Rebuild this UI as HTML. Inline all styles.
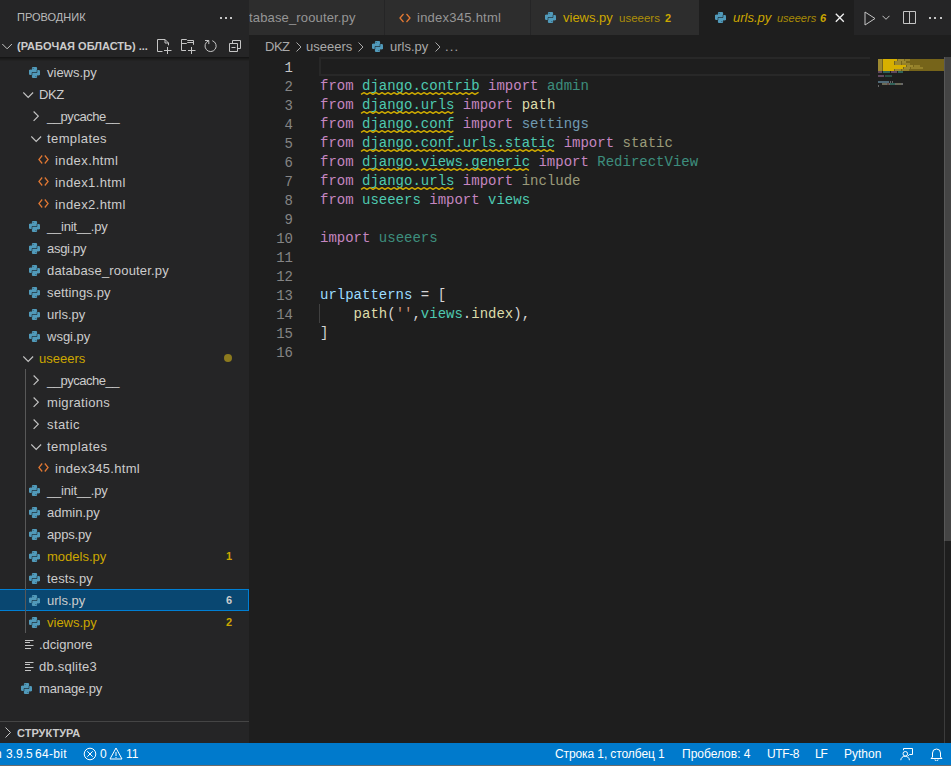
<!DOCTYPE html>
<html><head><meta charset="utf-8">
<style>
*{margin:0;padding:0;box-sizing:border-box}
html,body{width:951px;height:766px;overflow:hidden;background:#1e1e1e;font-family:"Liberation Sans",sans-serif;color:#cccccc;position:relative}
.a{position:absolute;white-space:pre}
.ic{position:absolute;display:block}
#side{position:absolute;left:0;top:0;width:249px;height:743px;background:#252526;overflow:hidden}
.tr{height:22px;line-height:22px;font-size:13px}
#tabs{position:absolute;left:249px;top:0;width:702px;height:35px;background:#252526}
.tab{position:absolute;top:0;height:35px;background:#2d2d2d;line-height:35px;font-size:13px;color:#969696;overflow:hidden}
.code{position:absolute;left:320px;height:19px;line-height:19px;font-family:"Liberation Mono",monospace;font-size:14px;color:#d4d4d4;white-space:pre}
.ln{position:absolute;left:249px;width:44px;text-align:right;height:19px;line-height:19px;font-family:"Liberation Mono",monospace;font-size:14px;color:#858585}
.k{color:#c586c0}.n{color:#4ec9b0}.f{color:#dcdcaa}.v{color:#9cdcfe}.s{color:#ce9178}
.fade{opacity:.65}
.sq{text-decoration:underline wavy #cca700;text-underline-offset:3px;text-decoration-thickness:1px}
#status{position:absolute;left:0;top:743px;width:951px;height:22px;background:#007acc;color:#ffffff;font-size:12px;line-height:22px}
#bline{position:absolute;left:0;top:765px;width:951px;height:1px;background:#6b6b6b}
</style></head><body>
<div id="side">
  <div class="a" style="left:17px;top:0;height:35px;line-height:35px;font-size:11px;color:#bbbbbb">ПРОВОДНИК</div>
  <div style="position:absolute;left:220px;top:17px;width:2px;height:2px;background:#c5c5c5"></div><div style="position:absolute;left:225px;top:17px;width:2px;height:2px;background:#c5c5c5"></div><div style="position:absolute;left:230px;top:17px;width:2px;height:2px;background:#c5c5c5"></div>
  <!-- workspace header -->
  <svg class="ic" style="left:2px;top:43px" width="11" height="7" viewBox="0 0 11 7"><path d="M0.3 1l4.8 4.8 4.8-4.8" fill="none" stroke="#c5c5c5" stroke-width="1"/></svg>
  <div class="a" style="left:17px;top:35px;height:22px;line-height:22px;font-size:11px;font-weight:bold;color:#cccccc">(РАБОЧАЯ ОБЛАСТЬ) ...</div>
  <!-- header icons -->
  <svg class="ic" style="left:156px;top:38px" width="17" height="17" viewBox="0 0 17 17"><path d="M6.5 13.5h-5v-12h7.5l3.5 3.5v2.3M9 1.5v3.5h3.5M8 12.5h7.5M11.5 9v7" fill="none" stroke="#c5c5c5" stroke-width="1"/></svg>
  <svg class="ic" style="left:180px;top:38px" width="17" height="17" viewBox="0 0 17 17"><path d="M6 12.5H1.5v-11h5l1 1h6v4.3M1.5 5.5h5l1-1h6M8 12.5h7.5M11.5 9v7" fill="none" stroke="#c5c5c5" stroke-width="1"/></svg>
  <svg class="ic" style="left:204px;top:39px" width="14" height="14" viewBox="0 0 14 14"><path d="M4.6 1.8A5.57 5.57 0 1 0 8.3 1.7" fill="none" stroke="#c5c5c5" stroke-width="1"/><path d="M1 1.5h3.8v3.6" fill="none" stroke="#c5c5c5" stroke-width="1"/></svg>
  <svg class="ic" style="left:228px;top:39px" width="14" height="14" viewBox="0 0 14 14"><path d="M4.5 4.5V1.5h8v8h-3M1.5 4.5h8v8h-8z M3.5 8.5h4" fill="none" stroke="#c5c5c5" stroke-width="1"/></svg>
  <div style="position:absolute;left:0;top:57px;width:249px;height:1px;background:#151515"></div><div style="position:absolute;left:0;top:58px;width:249px;height:1px;background:#1a1a1a"></div><div style="position:absolute;left:0;top:59px;width:249px;height:1px;background:#1e1e1e"></div><div style="position:absolute;left:0;top:60px;width:249px;height:1px;background:#222222"></div>
<svg class="ic" style="left:29px;top:67px" width="11" height="11" viewBox="0 0 11 11"><g fill="#519aba"><rect x="2.9" y="0" width="5.2" height="5.2" rx="1.1"/><rect x="0" y="2.7" width="3.4" height="5.3" rx="1.3"/><rect x="0" y="2.7" width="8.1" height="2.5" rx="1"/><rect x="2.9" y="5.8" width="5.2" height="5.2" rx="1.1"/><rect x="7.6" y="3" width="3.4" height="5.3" rx="1.3"/><rect x="2.9" y="5.8" width="8.1" height="2.5" rx="1"/></g><path d="M8 2.9V5.5H3V8.1" fill="none" stroke="#1d2a30" stroke-width=".7" opacity=".8"/><circle cx="4.1" cy="1.4" r=".5" fill="#2a4a5a"/><circle cx="6.9" cy="9.6" r=".5" fill="#2a4a5a"/></svg>
<div class="a tr" style="left:47px;top:62px;color:#cccccc">views.py</div>
<svg class="ic" style="left:23px;top:92px" width="11" height="7" viewBox="0 0 11 7"><path d="M0.3 0.5l4.9 4.9 4.9-4.9" fill="none" stroke="#c5c5c5" stroke-width="1.15"/></svg>
<div class="a tr" style="left:39px;top:84px;color:#cccccc;letter-spacing:-0.400px">DKZ</div>
<svg class="ic" style="left:33px;top:111px" width="6" height="11" viewBox="0 0 6 11"><path d="M0.6 0.5l4.7 4.7-4.7 4.7" fill="none" stroke="#c5c5c5" stroke-width="1.15"/></svg>
<div class="a tr" style="left:47px;top:106px;color:#cccccc;letter-spacing:-0.450px">__pycache__</div>
<svg class="ic" style="left:31px;top:136px" width="11" height="7" viewBox="0 0 11 7"><path d="M0.3 0.5l4.9 4.9 4.9-4.9" fill="none" stroke="#c5c5c5" stroke-width="1.15"/></svg>
<div class="a tr" style="left:47px;top:128px;color:#cccccc;letter-spacing:0.400px">templates</div>
<svg class="ic" style="left:38px;top:155px" width="11" height="9" viewBox="0 0 11 9"><path d="M4.2 0.5L0.9 4.5l3.3 4M6.8 0.5l3.3 4-3.3 4" fill="none" stroke="#e37933" stroke-width="1.2"/></svg>
<div class="a tr" style="left:55px;top:150px;color:#cccccc;letter-spacing:0.411px">index.html</div>
<svg class="ic" style="left:38px;top:177px" width="11" height="9" viewBox="0 0 11 9"><path d="M4.2 0.5L0.9 4.5l3.3 4M6.8 0.5l3.3 4-3.3 4" fill="none" stroke="#e37933" stroke-width="1.2"/></svg>
<div class="a tr" style="left:55px;top:172px;color:#cccccc;letter-spacing:0.400px">index1.html</div>
<svg class="ic" style="left:38px;top:199px" width="11" height="9" viewBox="0 0 11 9"><path d="M4.2 0.5L0.9 4.5l3.3 4M6.8 0.5l3.3 4-3.3 4" fill="none" stroke="#e37933" stroke-width="1.2"/></svg>
<div class="a tr" style="left:55px;top:194px;color:#cccccc;letter-spacing:0.400px">index2.html</div>
<svg class="ic" style="left:29px;top:221px" width="11" height="11" viewBox="0 0 11 11"><g fill="#519aba"><rect x="2.9" y="0" width="5.2" height="5.2" rx="1.1"/><rect x="0" y="2.7" width="3.4" height="5.3" rx="1.3"/><rect x="0" y="2.7" width="8.1" height="2.5" rx="1"/><rect x="2.9" y="5.8" width="5.2" height="5.2" rx="1.1"/><rect x="7.6" y="3" width="3.4" height="5.3" rx="1.3"/><rect x="2.9" y="5.8" width="8.1" height="2.5" rx="1"/></g><path d="M8 2.9V5.5H3V8.1" fill="none" stroke="#1d2a30" stroke-width=".7" opacity=".8"/><circle cx="4.1" cy="1.4" r=".5" fill="#2a4a5a"/><circle cx="6.9" cy="9.6" r=".5" fill="#2a4a5a"/></svg>
<div class="a tr" style="left:47px;top:216px;color:#cccccc;letter-spacing:-0.220px">__init__.py</div>
<svg class="ic" style="left:29px;top:243px" width="11" height="11" viewBox="0 0 11 11"><g fill="#519aba"><rect x="2.9" y="0" width="5.2" height="5.2" rx="1.1"/><rect x="0" y="2.7" width="3.4" height="5.3" rx="1.3"/><rect x="0" y="2.7" width="8.1" height="2.5" rx="1"/><rect x="2.9" y="5.8" width="5.2" height="5.2" rx="1.1"/><rect x="7.6" y="3" width="3.4" height="5.3" rx="1.3"/><rect x="2.9" y="5.8" width="8.1" height="2.5" rx="1"/></g><path d="M8 2.9V5.5H3V8.1" fill="none" stroke="#1d2a30" stroke-width=".7" opacity=".8"/><circle cx="4.1" cy="1.4" r=".5" fill="#2a4a5a"/><circle cx="6.9" cy="9.6" r=".5" fill="#2a4a5a"/></svg>
<div class="a tr" style="left:47px;top:238px;color:#cccccc;letter-spacing:-0.300px">asgi.py</div>
<svg class="ic" style="left:29px;top:265px" width="11" height="11" viewBox="0 0 11 11"><g fill="#519aba"><rect x="2.9" y="0" width="5.2" height="5.2" rx="1.1"/><rect x="0" y="2.7" width="3.4" height="5.3" rx="1.3"/><rect x="0" y="2.7" width="8.1" height="2.5" rx="1"/><rect x="2.9" y="5.8" width="5.2" height="5.2" rx="1.1"/><rect x="7.6" y="3" width="3.4" height="5.3" rx="1.3"/><rect x="2.9" y="5.8" width="8.1" height="2.5" rx="1"/></g><path d="M8 2.9V5.5H3V8.1" fill="none" stroke="#1d2a30" stroke-width=".7" opacity=".8"/><circle cx="4.1" cy="1.4" r=".5" fill="#2a4a5a"/><circle cx="6.9" cy="9.6" r=".5" fill="#2a4a5a"/></svg>
<div class="a tr" style="left:47px;top:260px;color:#cccccc;letter-spacing:0.178px">database_roouter.py</div>
<svg class="ic" style="left:29px;top:287px" width="11" height="11" viewBox="0 0 11 11"><g fill="#519aba"><rect x="2.9" y="0" width="5.2" height="5.2" rx="1.1"/><rect x="0" y="2.7" width="3.4" height="5.3" rx="1.3"/><rect x="0" y="2.7" width="8.1" height="2.5" rx="1"/><rect x="2.9" y="5.8" width="5.2" height="5.2" rx="1.1"/><rect x="7.6" y="3" width="3.4" height="5.3" rx="1.3"/><rect x="2.9" y="5.8" width="8.1" height="2.5" rx="1"/></g><path d="M8 2.9V5.5H3V8.1" fill="none" stroke="#1d2a30" stroke-width=".7" opacity=".8"/><circle cx="4.1" cy="1.4" r=".5" fill="#2a4a5a"/><circle cx="6.9" cy="9.6" r=".5" fill="#2a4a5a"/></svg>
<div class="a tr" style="left:47px;top:282px;color:#cccccc;letter-spacing:0.140px">settings.py</div>
<svg class="ic" style="left:29px;top:309px" width="11" height="11" viewBox="0 0 11 11"><g fill="#519aba"><rect x="2.9" y="0" width="5.2" height="5.2" rx="1.1"/><rect x="0" y="2.7" width="3.4" height="5.3" rx="1.3"/><rect x="0" y="2.7" width="8.1" height="2.5" rx="1"/><rect x="2.9" y="5.8" width="5.2" height="5.2" rx="1.1"/><rect x="7.6" y="3" width="3.4" height="5.3" rx="1.3"/><rect x="2.9" y="5.8" width="8.1" height="2.5" rx="1"/></g><path d="M8 2.9V5.5H3V8.1" fill="none" stroke="#1d2a30" stroke-width=".7" opacity=".8"/><circle cx="4.1" cy="1.4" r=".5" fill="#2a4a5a"/><circle cx="6.9" cy="9.6" r=".5" fill="#2a4a5a"/></svg>
<div class="a tr" style="left:47px;top:304px;color:#cccccc">urls.py</div>
<svg class="ic" style="left:29px;top:331px" width="11" height="11" viewBox="0 0 11 11"><g fill="#519aba"><rect x="2.9" y="0" width="5.2" height="5.2" rx="1.1"/><rect x="0" y="2.7" width="3.4" height="5.3" rx="1.3"/><rect x="0" y="2.7" width="8.1" height="2.5" rx="1"/><rect x="2.9" y="5.8" width="5.2" height="5.2" rx="1.1"/><rect x="7.6" y="3" width="3.4" height="5.3" rx="1.3"/><rect x="2.9" y="5.8" width="8.1" height="2.5" rx="1"/></g><path d="M8 2.9V5.5H3V8.1" fill="none" stroke="#1d2a30" stroke-width=".7" opacity=".8"/><circle cx="4.1" cy="1.4" r=".5" fill="#2a4a5a"/><circle cx="6.9" cy="9.6" r=".5" fill="#2a4a5a"/></svg>
<div class="a tr" style="left:47px;top:326px;color:#cccccc">wsgi.py</div>
<svg class="ic" style="left:23px;top:356px" width="11" height="7" viewBox="0 0 11 7"><path d="M0.3 0.5l4.9 4.9 4.9-4.9" fill="none" stroke="#c5c5c5" stroke-width="1.15"/></svg>
<div class="a tr" style="left:39px;top:348px;color:#cca700">useeers</div>
<div style="position:absolute;left:224px;top:354px;width:8px;height:8px;border-radius:4px;background:#8c7a1e"></div>
<svg class="ic" style="left:33px;top:375px" width="6" height="11" viewBox="0 0 6 11"><path d="M0.6 0.5l4.7 4.7-4.7 4.7" fill="none" stroke="#c5c5c5" stroke-width="1.15"/></svg>
<div class="a tr" style="left:47px;top:370px;color:#cccccc;letter-spacing:-0.480px">__pycache__</div>
<svg class="ic" style="left:33px;top:397px" width="6" height="11" viewBox="0 0 6 11"><path d="M0.6 0.5l4.7 4.7-4.7 4.7" fill="none" stroke="#c5c5c5" stroke-width="1.15"/></svg>
<div class="a tr" style="left:47px;top:392px;color:#cccccc;letter-spacing:0.322px">migrations</div>
<svg class="ic" style="left:33px;top:419px" width="6" height="11" viewBox="0 0 6 11"><path d="M0.6 0.5l4.7 4.7-4.7 4.7" fill="none" stroke="#c5c5c5" stroke-width="1.15"/></svg>
<div class="a tr" style="left:47px;top:414px;color:#cccccc;letter-spacing:0.420px">static</div>
<svg class="ic" style="left:31px;top:444px" width="11" height="7" viewBox="0 0 11 7"><path d="M0.3 0.5l4.9 4.9 4.9-4.9" fill="none" stroke="#c5c5c5" stroke-width="1.15"/></svg>
<div class="a tr" style="left:47px;top:436px;color:#cccccc;letter-spacing:0.463px">templates</div>
<svg class="ic" style="left:38px;top:463px" width="11" height="9" viewBox="0 0 11 9"><path d="M4.2 0.5L0.9 4.5l3.3 4M6.8 0.5l3.3 4-3.3 4" fill="none" stroke="#e37933" stroke-width="1.2"/></svg>
<div class="a tr" style="left:55px;top:458px;color:#cccccc;letter-spacing:0.317px">index345.html</div>
<svg class="ic" style="left:29px;top:485px" width="11" height="11" viewBox="0 0 11 11"><g fill="#519aba"><rect x="2.9" y="0" width="5.2" height="5.2" rx="1.1"/><rect x="0" y="2.7" width="3.4" height="5.3" rx="1.3"/><rect x="0" y="2.7" width="8.1" height="2.5" rx="1"/><rect x="2.9" y="5.8" width="5.2" height="5.2" rx="1.1"/><rect x="7.6" y="3" width="3.4" height="5.3" rx="1.3"/><rect x="2.9" y="5.8" width="8.1" height="2.5" rx="1"/></g><path d="M8 2.9V5.5H3V8.1" fill="none" stroke="#1d2a30" stroke-width=".7" opacity=".8"/><circle cx="4.1" cy="1.4" r=".5" fill="#2a4a5a"/><circle cx="6.9" cy="9.6" r=".5" fill="#2a4a5a"/></svg>
<div class="a tr" style="left:47px;top:480px;color:#cccccc;letter-spacing:-0.210px">__init__.py</div>
<svg class="ic" style="left:29px;top:507px" width="11" height="11" viewBox="0 0 11 11"><g fill="#519aba"><rect x="2.9" y="0" width="5.2" height="5.2" rx="1.1"/><rect x="0" y="2.7" width="3.4" height="5.3" rx="1.3"/><rect x="0" y="2.7" width="8.1" height="2.5" rx="1"/><rect x="2.9" y="5.8" width="5.2" height="5.2" rx="1.1"/><rect x="7.6" y="3" width="3.4" height="5.3" rx="1.3"/><rect x="2.9" y="5.8" width="8.1" height="2.5" rx="1"/></g><path d="M8 2.9V5.5H3V8.1" fill="none" stroke="#1d2a30" stroke-width=".7" opacity=".8"/><circle cx="4.1" cy="1.4" r=".5" fill="#2a4a5a"/><circle cx="6.9" cy="9.6" r=".5" fill="#2a4a5a"/></svg>
<div class="a tr" style="left:47px;top:502px;color:#cccccc">admin.py</div>
<svg class="ic" style="left:29px;top:529px" width="11" height="11" viewBox="0 0 11 11"><g fill="#519aba"><rect x="2.9" y="0" width="5.2" height="5.2" rx="1.1"/><rect x="0" y="2.7" width="3.4" height="5.3" rx="1.3"/><rect x="0" y="2.7" width="8.1" height="2.5" rx="1"/><rect x="2.9" y="5.8" width="5.2" height="5.2" rx="1.1"/><rect x="7.6" y="3" width="3.4" height="5.3" rx="1.3"/><rect x="2.9" y="5.8" width="8.1" height="2.5" rx="1"/></g><path d="M8 2.9V5.5H3V8.1" fill="none" stroke="#1d2a30" stroke-width=".7" opacity=".8"/><circle cx="4.1" cy="1.4" r=".5" fill="#2a4a5a"/><circle cx="6.9" cy="9.6" r=".5" fill="#2a4a5a"/></svg>
<div class="a tr" style="left:47px;top:524px;color:#cccccc;letter-spacing:-0.167px">apps.py</div>
<svg class="ic" style="left:29px;top:551px" width="11" height="11" viewBox="0 0 11 11"><g fill="#519aba"><rect x="2.9" y="0" width="5.2" height="5.2" rx="1.1"/><rect x="0" y="2.7" width="3.4" height="5.3" rx="1.3"/><rect x="0" y="2.7" width="8.1" height="2.5" rx="1"/><rect x="2.9" y="5.8" width="5.2" height="5.2" rx="1.1"/><rect x="7.6" y="3" width="3.4" height="5.3" rx="1.3"/><rect x="2.9" y="5.8" width="8.1" height="2.5" rx="1"/></g><path d="M8 2.9V5.5H3V8.1" fill="none" stroke="#1d2a30" stroke-width=".7" opacity=".8"/><circle cx="4.1" cy="1.4" r=".5" fill="#2a4a5a"/><circle cx="6.9" cy="9.6" r=".5" fill="#2a4a5a"/></svg>
<div class="a tr" style="left:47px;top:546px;color:#cca700">models.py</div>
<div class="a tr" style="left:226px;top:545px;color:#cca700;font-size:11px;font-weight:bold">1</div>
<svg class="ic" style="left:29px;top:573px" width="11" height="11" viewBox="0 0 11 11"><g fill="#519aba"><rect x="2.9" y="0" width="5.2" height="5.2" rx="1.1"/><rect x="0" y="2.7" width="3.4" height="5.3" rx="1.3"/><rect x="0" y="2.7" width="8.1" height="2.5" rx="1"/><rect x="2.9" y="5.8" width="5.2" height="5.2" rx="1.1"/><rect x="7.6" y="3" width="3.4" height="5.3" rx="1.3"/><rect x="2.9" y="5.8" width="8.1" height="2.5" rx="1"/></g><path d="M8 2.9V5.5H3V8.1" fill="none" stroke="#1d2a30" stroke-width=".7" opacity=".8"/><circle cx="4.1" cy="1.4" r=".5" fill="#2a4a5a"/><circle cx="6.9" cy="9.6" r=".5" fill="#2a4a5a"/></svg>
<div class="a tr" style="left:47px;top:568px;color:#cccccc;letter-spacing:0.143px">tests.py</div>
<div style="position:absolute;left:0;top:589px;width:249px;height:22px;background:#094771;border:1px solid #007fd4;border-left:none"></div>
<svg class="ic" style="left:29px;top:595px" width="11" height="11" viewBox="0 0 11 11"><g fill="#519aba"><rect x="2.9" y="0" width="5.2" height="5.2" rx="1.1"/><rect x="0" y="2.7" width="3.4" height="5.3" rx="1.3"/><rect x="0" y="2.7" width="8.1" height="2.5" rx="1"/><rect x="2.9" y="5.8" width="5.2" height="5.2" rx="1.1"/><rect x="7.6" y="3" width="3.4" height="5.3" rx="1.3"/><rect x="2.9" y="5.8" width="8.1" height="2.5" rx="1"/></g><path d="M8 2.9V5.5H3V8.1" fill="none" stroke="#1d2a30" stroke-width=".7" opacity=".8"/><circle cx="4.1" cy="1.4" r=".5" fill="#2a4a5a"/><circle cx="6.9" cy="9.6" r=".5" fill="#2a4a5a"/></svg>
<div class="a tr" style="left:47px;top:590px;color:#cccccc">urls.py</div>
<div class="a tr" style="left:226px;top:589px;color:#cccccc;font-size:11px;font-weight:bold">6</div>
<svg class="ic" style="left:29px;top:617px" width="11" height="11" viewBox="0 0 11 11"><g fill="#519aba"><rect x="2.9" y="0" width="5.2" height="5.2" rx="1.1"/><rect x="0" y="2.7" width="3.4" height="5.3" rx="1.3"/><rect x="0" y="2.7" width="8.1" height="2.5" rx="1"/><rect x="2.9" y="5.8" width="5.2" height="5.2" rx="1.1"/><rect x="7.6" y="3" width="3.4" height="5.3" rx="1.3"/><rect x="2.9" y="5.8" width="8.1" height="2.5" rx="1"/></g><path d="M8 2.9V5.5H3V8.1" fill="none" stroke="#1d2a30" stroke-width=".7" opacity=".8"/><circle cx="4.1" cy="1.4" r=".5" fill="#2a4a5a"/><circle cx="6.9" cy="9.6" r=".5" fill="#2a4a5a"/></svg>
<div class="a tr" style="left:47px;top:612px;color:#cca700">views.py</div>
<div class="a tr" style="left:226px;top:611px;color:#cca700;font-size:11px;font-weight:bold">2</div>
<svg class="ic" style="left:24px;top:640px" width="10" height="10" viewBox="0 0 10 10"><path d="M1 0.5h8.5M1 2.5h5M1 5.5h8.5M1 8.5h6" fill="none" stroke="#c5c5c5" stroke-width="1"/></svg>
<div class="a tr" style="left:39px;top:634px;color:#cccccc">.dcignore</div>
<svg class="ic" style="left:24px;top:662px" width="10" height="10" viewBox="0 0 10 10"><path d="M1 0.5h8.5M1 2.5h5M1 5.5h8.5M1 8.5h6" fill="none" stroke="#c5c5c5" stroke-width="1"/></svg>
<div class="a tr" style="left:39px;top:656px;color:#cccccc;letter-spacing:0.222px">db.sqlite3</div>
<svg class="ic" style="left:21px;top:683px" width="11" height="11" viewBox="0 0 11 11"><g fill="#519aba"><rect x="2.9" y="0" width="5.2" height="5.2" rx="1.1"/><rect x="0" y="2.7" width="3.4" height="5.3" rx="1.3"/><rect x="0" y="2.7" width="8.1" height="2.5" rx="1"/><rect x="2.9" y="5.8" width="5.2" height="5.2" rx="1.1"/><rect x="7.6" y="3" width="3.4" height="5.3" rx="1.3"/><rect x="2.9" y="5.8" width="8.1" height="2.5" rx="1"/></g><path d="M8 2.9V5.5H3V8.1" fill="none" stroke="#1d2a30" stroke-width=".7" opacity=".8"/><circle cx="4.1" cy="1.4" r=".5" fill="#2a4a5a"/><circle cx="6.9" cy="9.6" r=".5" fill="#2a4a5a"/></svg>
<div class="a tr" style="left:39px;top:678px;color:#cccccc;letter-spacing:-0.125px">manage.py</div>
<div style="position:absolute;left:25px;top:369px;width:1px;height:264px;background:#585858"></div>
  <!-- outline header -->
  <div style="position:absolute;left:0;top:721px;width:249px;height:1px;background:#454545"></div>
  <div style="position:absolute;left:0;top:722px;width:249px;height:21px;background:#252526"></div>
  <svg class="ic" style="left:5px;top:727px" width="6" height="11" viewBox="0 0 6 11"><path d="M0.5 0.5l5 5-5 5" fill="none" stroke="#c5c5c5" stroke-width="1"/></svg>
  <div class="a" style="left:17px;top:723px;height:21px;line-height:21px;font-size:11px;font-weight:bold;color:#cccccc">СТРУКТУРА</div>
</div>

<div id="tabs">
  <div class="tab" style="left:0;width:135px;color:#969696"><span class="a" style="left:0;top:0;letter-spacing:0.15px">tabase_roouter.py</span></div>
  <div class="tab" style="left:136px;width:145px"><svg class="ic" style="left:14px;top:13px" width="12" height="10" viewBox="0 0 12 10"><path d="M4.5 1L1 5l3.5 4M7.5 1L11 5 7.5 9" fill="none" stroke="#e37933" stroke-width="1.3"/></svg><span class="a" style="left:32px;top:0;letter-spacing:0.25px">index345.html</span></div>
  <div class="tab" style="left:282px;width:168px;color:#cca700"><svg class="ic" style="left:14px;top:12px" width="11" height="11" viewBox="0 0 11 11"><g fill="#519aba"><rect x="2.9" y="0" width="5.2" height="5.2" rx="1.1"/><rect x="0" y="2.7" width="3.4" height="5.3" rx="1.3"/><rect x="0" y="2.7" width="8.1" height="2.5" rx="1"/><rect x="2.9" y="5.8" width="5.2" height="5.2" rx="1.1"/><rect x="7.6" y="3" width="3.4" height="5.3" rx="1.3"/><rect x="2.9" y="5.8" width="8.1" height="2.5" rx="1"/></g><path d="M8 2.9V5.5H3V8.1" fill="none" stroke="#1d2a30" stroke-width=".7" opacity=".8"/><circle cx="4.1" cy="1.4" r=".5" fill="#2a4a5a"/><circle cx="6.9" cy="9.6" r=".5" fill="#2a4a5a"/></svg><span class="a" style="left:32px;top:0">views.py</span><span class="a" style="left:88px;top:1px;font-size:11.5px;opacity:.8">useeers</span><span class="a" style="left:134px;top:1px;font-size:11px;font-weight:bold">2</span></div>
  <div class="tab" style="left:450px;width:155px;background:#1e1e1e;color:#cca700"><svg class="ic" style="left:16px;top:12px" width="11" height="11" viewBox="0 0 11 11"><g fill="#519aba"><rect x="2.9" y="0" width="5.2" height="5.2" rx="1.1"/><rect x="0" y="2.7" width="3.4" height="5.3" rx="1.3"/><rect x="0" y="2.7" width="8.1" height="2.5" rx="1"/><rect x="2.9" y="5.8" width="5.2" height="5.2" rx="1.1"/><rect x="7.6" y="3" width="3.4" height="5.3" rx="1.3"/><rect x="2.9" y="5.8" width="8.1" height="2.5" rx="1"/></g><path d="M8 2.9V5.5H3V8.1" fill="none" stroke="#1d2a30" stroke-width=".7" opacity=".8"/><circle cx="4.1" cy="1.4" r=".5" fill="#2a4a5a"/><circle cx="6.9" cy="9.6" r=".5" fill="#2a4a5a"/></svg><span class="a" style="left:34px;top:0;font-style:italic">urls.py</span><span class="a" style="left:78px;top:1px;font-size:11px;font-style:italic;opacity:.8">useeers</span><span class="a" style="left:121px;top:1px;font-size:11px;font-weight:bold;font-style:italic">6</span><svg class="ic" style="left:136px;top:13px" width="10" height="10" viewBox="0 0 10 10"><path d="M0.8 0.8l8 8M8.8 0.8l-8 8" stroke="#f0f0f0" stroke-width="1.35"/></svg></div>
  <!-- editor actions -->
  <svg class="ic" style="left:615px;top:11px" width="12" height="15" viewBox="0 0 12 15"><path d="M1 1l10 6.5L1 14z" fill="none" stroke="#c5c5c5" stroke-width="1"/></svg>
  <svg class="ic" style="left:633px;top:15px" width="8" height="5" viewBox="0 0 8 5"><path d="M0.5 0.8l3.5 3.5 3.5-3.5" fill="none" stroke="#c5c5c5" stroke-width="1"/></svg>
  <svg class="ic" style="left:654px;top:11px" width="14" height="14" viewBox="0 0 14 14"><path d="M0.5 0.5h12v12h-12zM6.5 0.5v12" fill="none" stroke="#c5c5c5" stroke-width="1"/></svg>
  <div style="position:absolute;left:680px;top:17px;width:2px;height:2px;background:#c5c5c5"></div><div style="position:absolute;left:685px;top:17px;width:2px;height:2px;background:#c5c5c5"></div><div style="position:absolute;left:691px;top:17px;width:2px;height:2px;background:#c5c5c5"></div>
</div>

<!-- breadcrumbs -->
<div class="a" style="left:265px;top:36px;height:22px;line-height:22px;font-size:13px;color:#a9a9a9;letter-spacing:-0.5px">DKZ</div>
<svg class="ic" style="left:296px;top:42px" width="6" height="10" viewBox="0 0 6 10"><path d="M0.5 0.5l4.5 4.5-4.5 4.5" fill="none" stroke="#a9a9a9" stroke-width="1"/></svg>
<div class="a" style="left:306px;top:36px;height:22px;line-height:22px;font-size:13px;color:#a9a9a9">useeers</div>
<svg class="ic" style="left:358px;top:42px" width="6" height="10" viewBox="0 0 6 10"><path d="M0.5 0.5l4.5 4.5-4.5 4.5" fill="none" stroke="#a9a9a9" stroke-width="1"/></svg>
<svg class="ic" style="left:372px;top:41px" width="11" height="11" viewBox="0 0 11 11"><g fill="#519aba"><rect x="2.9" y="0" width="5.2" height="5.2" rx="1.1"/><rect x="0" y="2.7" width="3.4" height="5.3" rx="1.3"/><rect x="0" y="2.7" width="8.1" height="2.5" rx="1"/><rect x="2.9" y="5.8" width="5.2" height="5.2" rx="1.1"/><rect x="7.6" y="3" width="3.4" height="5.3" rx="1.3"/><rect x="2.9" y="5.8" width="8.1" height="2.5" rx="1"/></g><path d="M8 2.9V5.5H3V8.1" fill="none" stroke="#1d2a30" stroke-width=".7" opacity=".8"/><circle cx="4.1" cy="1.4" r=".5" fill="#2a4a5a"/><circle cx="6.9" cy="9.6" r=".5" fill="#2a4a5a"/></svg>
<div class="a" style="left:390px;top:36px;height:22px;line-height:22px;font-size:13px;color:#a9a9a9">urls.py</div>
<svg class="ic" style="left:435px;top:42px" width="6" height="10" viewBox="0 0 6 10"><path d="M0.5 0.5l4.5 4.5-4.5 4.5" fill="none" stroke="#a9a9a9" stroke-width="1"/></svg>
<div class="a" style="left:445px;top:36px;height:22px;line-height:22px;font-size:13px;color:#a9a9a9;letter-spacing:1.2px">...</div>

<!-- current line highlight -->
<div style="position:absolute;left:319px;top:57px;width:551px;height:19px;border:2px solid #282828;border-right:none"></div>
<!-- indent guide line 14 -->
<div style="position:absolute;left:319px;top:304px;width:1px;height:19px;background:#404040"></div>
<div class="ln" style="top:59px;color:#c6c6c6">1</div>
<div class="ln" style="top:78px;color:#858585">2</div>
<div class="code" style="top:77px"><span class="k">from</span> <span class="n ">django.contrib</span> <span class="k">import</span> <span class="n fade">admin</span></div>
<div class="ln" style="top:97px;color:#858585">3</div>
<div class="code" style="top:96px"><span class="k">from</span> <span class="n ">django.urls</span> <span class="k">import</span> <span class="f">path</span></div>
<div class="ln" style="top:116px;color:#858585">4</div>
<div class="code" style="top:115px"><span class="k">from</span> <span class="n ">django.conf</span> <span class="k">import</span> <span class="v fade">settings</span></div>
<div class="ln" style="top:135px;color:#858585">5</div>
<div class="code" style="top:134px"><span class="k">from</span> <span class="n ">django.conf.urls.static</span> <span class="k">import</span> <span class="f fade">static</span></div>
<div class="ln" style="top:154px;color:#858585">6</div>
<div class="code" style="top:153px"><span class="k">from</span> <span class="n ">django.views.generic</span> <span class="k">import</span> <span class="n fade">RedirectView</span></div>
<div class="ln" style="top:173px;color:#858585">7</div>
<div class="code" style="top:172px"><span class="k">from</span> <span class="n ">django.urls</span> <span class="k">import</span> <span class="f fade">include</span></div>
<div class="ln" style="top:192px;color:#858585">8</div>
<div class="code" style="top:191px"><span class="k">from</span> <span class="n">useeers</span> <span class="k">import</span> <span class="n">views</span></div>
<div class="ln" style="top:211px;color:#858585">9</div>
<div class="ln" style="top:230px;color:#858585">10</div>
<div class="code" style="top:229px"><span class="k">import</span> <span class="n fade">useeers</span></div>
<div class="ln" style="top:249px;color:#858585">11</div>
<div class="ln" style="top:268px;color:#858585">12</div>
<div class="ln" style="top:287px;color:#858585">13</div>
<div class="code" style="top:286px"><span class="v">urlpatterns</span> = [</div>
<div class="ln" style="top:306px;color:#858585">14</div>
<div class="code" style="top:305px">    <span class="f">path</span>(<span class="s">''</span>,<span class="n">views</span>.<span class="f">index</span>),</div>
<div class="ln" style="top:325px;color:#858585">15</div>
<div class="code" style="top:324px">]</div>
<div class="ln" style="top:344px;color:#858585">16</div>
<div style="position:absolute;left:878px;top:59px;width:66px;height:12px;background:#76641a"></div><div style="position:absolute;left:883px;top:59px;width:14px;height:2px;background:#d7b000"></div><div style="position:absolute;left:883px;top:61px;width:11px;height:2px;background:#d7b000"></div><div style="position:absolute;left:883px;top:63px;width:11px;height:2px;background:#d7b000"></div><div style="position:absolute;left:883px;top:65px;width:23px;height:2px;background:#d7b000"></div><div style="position:absolute;left:883px;top:67px;width:20px;height:2px;background:#d7b000"></div><div style="position:absolute;left:883px;top:69px;width:11px;height:2px;background:#d7b000"></div><div style="position:absolute;left:878px;top:59px;width:1px;height:2px;background:#a89236;opacity:0.8"></div><div style="position:absolute;left:879px;top:59px;width:1px;height:2px;background:#a89236;opacity:0.8"></div><div style="position:absolute;left:880px;top:59px;width:1px;height:2px;background:#a89236;opacity:0.8"></div><div style="position:absolute;left:881px;top:59px;width:1px;height:2px;background:#a89236;opacity:0.8"></div><div style="position:absolute;left:898px;top:59px;width:1px;height:2px;background:#a89236;opacity:0.8"></div><div style="position:absolute;left:899px;top:59px;width:1px;height:2px;background:#a89236;opacity:0.8"></div><div style="position:absolute;left:900px;top:59px;width:1px;height:2px;background:#a89236;opacity:0.8"></div><div style="position:absolute;left:901px;top:59px;width:1px;height:2px;background:#a89236;opacity:0.8"></div><div style="position:absolute;left:902px;top:59px;width:1px;height:2px;background:#a89236;opacity:0.8"></div><div style="position:absolute;left:903px;top:59px;width:1px;height:2px;background:#a89236;opacity:0.8"></div><div style="position:absolute;left:905px;top:59px;width:1px;height:2px;background:#a89236;opacity:0.6"></div><div style="position:absolute;left:906px;top:59px;width:1px;height:2px;background:#a89236;opacity:0.6"></div><div style="position:absolute;left:907px;top:59px;width:1px;height:2px;background:#a89236;opacity:0.6"></div><div style="position:absolute;left:908px;top:59px;width:1px;height:2px;background:#a89236;opacity:0.6"></div><div style="position:absolute;left:909px;top:59px;width:1px;height:2px;background:#a89236;opacity:0.6"></div><div style="position:absolute;left:878px;top:61px;width:1px;height:2px;background:#a89236;opacity:0.8"></div><div style="position:absolute;left:879px;top:61px;width:1px;height:2px;background:#a89236;opacity:0.8"></div><div style="position:absolute;left:880px;top:61px;width:1px;height:2px;background:#a89236;opacity:0.8"></div><div style="position:absolute;left:881px;top:61px;width:1px;height:2px;background:#a89236;opacity:0.8"></div><div style="position:absolute;left:895px;top:61px;width:1px;height:2px;background:#a89236;opacity:0.8"></div><div style="position:absolute;left:896px;top:61px;width:1px;height:2px;background:#a89236;opacity:0.8"></div><div style="position:absolute;left:897px;top:61px;width:1px;height:2px;background:#a89236;opacity:0.8"></div><div style="position:absolute;left:898px;top:61px;width:1px;height:2px;background:#a89236;opacity:0.8"></div><div style="position:absolute;left:899px;top:61px;width:1px;height:2px;background:#a89236;opacity:0.8"></div><div style="position:absolute;left:900px;top:61px;width:1px;height:2px;background:#a89236;opacity:0.8"></div><div style="position:absolute;left:902px;top:61px;width:1px;height:2px;background:#a89236;opacity:0.8"></div><div style="position:absolute;left:903px;top:61px;width:1px;height:2px;background:#a89236;opacity:0.8"></div><div style="position:absolute;left:904px;top:61px;width:1px;height:2px;background:#a89236;opacity:0.8"></div><div style="position:absolute;left:905px;top:61px;width:1px;height:2px;background:#a89236;opacity:0.8"></div><div style="position:absolute;left:878px;top:63px;width:1px;height:2px;background:#a89236;opacity:0.8"></div><div style="position:absolute;left:879px;top:63px;width:1px;height:2px;background:#a89236;opacity:0.8"></div><div style="position:absolute;left:880px;top:63px;width:1px;height:2px;background:#a89236;opacity:0.8"></div><div style="position:absolute;left:881px;top:63px;width:1px;height:2px;background:#a89236;opacity:0.8"></div><div style="position:absolute;left:895px;top:63px;width:1px;height:2px;background:#a89236;opacity:0.8"></div><div style="position:absolute;left:896px;top:63px;width:1px;height:2px;background:#a89236;opacity:0.8"></div><div style="position:absolute;left:897px;top:63px;width:1px;height:2px;background:#a89236;opacity:0.8"></div><div style="position:absolute;left:898px;top:63px;width:1px;height:2px;background:#a89236;opacity:0.8"></div><div style="position:absolute;left:899px;top:63px;width:1px;height:2px;background:#a89236;opacity:0.8"></div><div style="position:absolute;left:900px;top:63px;width:1px;height:2px;background:#a89236;opacity:0.8"></div><div style="position:absolute;left:902px;top:63px;width:1px;height:2px;background:#a89236;opacity:0.6"></div><div style="position:absolute;left:903px;top:63px;width:1px;height:2px;background:#a89236;opacity:0.6"></div><div style="position:absolute;left:904px;top:63px;width:1px;height:2px;background:#a89236;opacity:0.6"></div><div style="position:absolute;left:905px;top:63px;width:1px;height:2px;background:#a89236;opacity:0.6"></div><div style="position:absolute;left:906px;top:63px;width:1px;height:2px;background:#a89236;opacity:0.6"></div><div style="position:absolute;left:907px;top:63px;width:1px;height:2px;background:#a89236;opacity:0.6"></div><div style="position:absolute;left:908px;top:63px;width:1px;height:2px;background:#a89236;opacity:0.6"></div><div style="position:absolute;left:909px;top:63px;width:1px;height:2px;background:#a89236;opacity:0.6"></div><div style="position:absolute;left:878px;top:65px;width:1px;height:2px;background:#a89236;opacity:0.8"></div><div style="position:absolute;left:879px;top:65px;width:1px;height:2px;background:#a89236;opacity:0.8"></div><div style="position:absolute;left:880px;top:65px;width:1px;height:2px;background:#a89236;opacity:0.8"></div><div style="position:absolute;left:881px;top:65px;width:1px;height:2px;background:#a89236;opacity:0.8"></div><div style="position:absolute;left:907px;top:65px;width:1px;height:2px;background:#a89236;opacity:0.8"></div><div style="position:absolute;left:908px;top:65px;width:1px;height:2px;background:#a89236;opacity:0.8"></div><div style="position:absolute;left:909px;top:65px;width:1px;height:2px;background:#a89236;opacity:0.8"></div><div style="position:absolute;left:910px;top:65px;width:1px;height:2px;background:#a89236;opacity:0.8"></div><div style="position:absolute;left:911px;top:65px;width:1px;height:2px;background:#a89236;opacity:0.8"></div><div style="position:absolute;left:912px;top:65px;width:1px;height:2px;background:#a89236;opacity:0.8"></div><div style="position:absolute;left:914px;top:65px;width:1px;height:2px;background:#a89236;opacity:0.6"></div><div style="position:absolute;left:915px;top:65px;width:1px;height:2px;background:#a89236;opacity:0.6"></div><div style="position:absolute;left:916px;top:65px;width:1px;height:2px;background:#a89236;opacity:0.6"></div><div style="position:absolute;left:917px;top:65px;width:1px;height:2px;background:#a89236;opacity:0.6"></div><div style="position:absolute;left:918px;top:65px;width:1px;height:2px;background:#a89236;opacity:0.6"></div><div style="position:absolute;left:919px;top:65px;width:1px;height:2px;background:#a89236;opacity:0.6"></div><div style="position:absolute;left:878px;top:67px;width:1px;height:2px;background:#a89236;opacity:0.8"></div><div style="position:absolute;left:879px;top:67px;width:1px;height:2px;background:#a89236;opacity:0.8"></div><div style="position:absolute;left:880px;top:67px;width:1px;height:2px;background:#a89236;opacity:0.8"></div><div style="position:absolute;left:881px;top:67px;width:1px;height:2px;background:#a89236;opacity:0.8"></div><div style="position:absolute;left:904px;top:67px;width:1px;height:2px;background:#a89236;opacity:0.8"></div><div style="position:absolute;left:905px;top:67px;width:1px;height:2px;background:#a89236;opacity:0.8"></div><div style="position:absolute;left:906px;top:67px;width:1px;height:2px;background:#a89236;opacity:0.8"></div><div style="position:absolute;left:907px;top:67px;width:1px;height:2px;background:#a89236;opacity:0.8"></div><div style="position:absolute;left:908px;top:67px;width:1px;height:2px;background:#a89236;opacity:0.8"></div><div style="position:absolute;left:909px;top:67px;width:1px;height:2px;background:#a89236;opacity:0.8"></div><div style="position:absolute;left:911px;top:67px;width:1px;height:2px;background:#a89236;opacity:0.6"></div><div style="position:absolute;left:912px;top:67px;width:1px;height:2px;background:#a89236;opacity:0.6"></div><div style="position:absolute;left:913px;top:67px;width:1px;height:2px;background:#a89236;opacity:0.6"></div><div style="position:absolute;left:914px;top:67px;width:1px;height:2px;background:#a89236;opacity:0.6"></div><div style="position:absolute;left:915px;top:67px;width:1px;height:2px;background:#a89236;opacity:0.6"></div><div style="position:absolute;left:916px;top:67px;width:1px;height:2px;background:#a89236;opacity:0.6"></div><div style="position:absolute;left:917px;top:67px;width:1px;height:2px;background:#a89236;opacity:0.6"></div><div style="position:absolute;left:918px;top:67px;width:1px;height:2px;background:#a89236;opacity:0.6"></div><div style="position:absolute;left:919px;top:67px;width:1px;height:2px;background:#a89236;opacity:0.6"></div><div style="position:absolute;left:920px;top:67px;width:1px;height:2px;background:#a89236;opacity:0.6"></div><div style="position:absolute;left:921px;top:67px;width:1px;height:2px;background:#a89236;opacity:0.6"></div><div style="position:absolute;left:922px;top:67px;width:1px;height:2px;background:#a89236;opacity:0.6"></div><div style="position:absolute;left:878px;top:69px;width:1px;height:2px;background:#a89236;opacity:0.8"></div><div style="position:absolute;left:879px;top:69px;width:1px;height:2px;background:#a89236;opacity:0.8"></div><div style="position:absolute;left:880px;top:69px;width:1px;height:2px;background:#a89236;opacity:0.8"></div><div style="position:absolute;left:881px;top:69px;width:1px;height:2px;background:#a89236;opacity:0.8"></div><div style="position:absolute;left:895px;top:69px;width:1px;height:2px;background:#a89236;opacity:0.8"></div><div style="position:absolute;left:896px;top:69px;width:1px;height:2px;background:#a89236;opacity:0.8"></div><div style="position:absolute;left:897px;top:69px;width:1px;height:2px;background:#a89236;opacity:0.8"></div><div style="position:absolute;left:898px;top:69px;width:1px;height:2px;background:#a89236;opacity:0.8"></div><div style="position:absolute;left:899px;top:69px;width:1px;height:2px;background:#a89236;opacity:0.8"></div><div style="position:absolute;left:900px;top:69px;width:1px;height:2px;background:#a89236;opacity:0.8"></div><div style="position:absolute;left:902px;top:69px;width:1px;height:2px;background:#a89236;opacity:0.6"></div><div style="position:absolute;left:903px;top:69px;width:1px;height:2px;background:#a89236;opacity:0.6"></div><div style="position:absolute;left:904px;top:69px;width:1px;height:2px;background:#a89236;opacity:0.6"></div><div style="position:absolute;left:905px;top:69px;width:1px;height:2px;background:#a89236;opacity:0.6"></div><div style="position:absolute;left:906px;top:69px;width:1px;height:2px;background:#a89236;opacity:0.6"></div><div style="position:absolute;left:907px;top:69px;width:1px;height:2px;background:#a89236;opacity:0.6"></div><div style="position:absolute;left:908px;top:69px;width:1px;height:2px;background:#a89236;opacity:0.6"></div><div style="position:absolute;left:878px;top:71px;width:1px;height:2px;background:#c586c0;opacity:0.4"></div><div style="position:absolute;left:879px;top:71px;width:1px;height:2px;background:#c586c0;opacity:0.4"></div><div style="position:absolute;left:880px;top:71px;width:1px;height:2px;background:#c586c0;opacity:0.4"></div><div style="position:absolute;left:881px;top:71px;width:1px;height:2px;background:#c586c0;opacity:0.4"></div><div style="position:absolute;left:883px;top:71px;width:1px;height:2px;background:#4ec9b0;opacity:0.4"></div><div style="position:absolute;left:884px;top:71px;width:1px;height:2px;background:#4ec9b0;opacity:0.4"></div><div style="position:absolute;left:885px;top:71px;width:1px;height:2px;background:#4ec9b0;opacity:0.4"></div><div style="position:absolute;left:886px;top:71px;width:1px;height:2px;background:#4ec9b0;opacity:0.4"></div><div style="position:absolute;left:887px;top:71px;width:1px;height:2px;background:#4ec9b0;opacity:0.4"></div><div style="position:absolute;left:888px;top:71px;width:1px;height:2px;background:#4ec9b0;opacity:0.4"></div><div style="position:absolute;left:889px;top:71px;width:1px;height:2px;background:#4ec9b0;opacity:0.4"></div><div style="position:absolute;left:891px;top:71px;width:1px;height:2px;background:#c586c0;opacity:0.4"></div><div style="position:absolute;left:892px;top:71px;width:1px;height:2px;background:#c586c0;opacity:0.4"></div><div style="position:absolute;left:893px;top:71px;width:1px;height:2px;background:#c586c0;opacity:0.4"></div><div style="position:absolute;left:894px;top:71px;width:1px;height:2px;background:#c586c0;opacity:0.4"></div><div style="position:absolute;left:895px;top:71px;width:1px;height:2px;background:#c586c0;opacity:0.4"></div><div style="position:absolute;left:896px;top:71px;width:1px;height:2px;background:#c586c0;opacity:0.4"></div><div style="position:absolute;left:898px;top:71px;width:1px;height:2px;background:#4ec9b0;opacity:0.4"></div><div style="position:absolute;left:899px;top:71px;width:1px;height:2px;background:#4ec9b0;opacity:0.4"></div><div style="position:absolute;left:900px;top:71px;width:1px;height:2px;background:#4ec9b0;opacity:0.4"></div><div style="position:absolute;left:901px;top:71px;width:1px;height:2px;background:#4ec9b0;opacity:0.4"></div><div style="position:absolute;left:902px;top:71px;width:1px;height:2px;background:#4ec9b0;opacity:0.4"></div><div style="position:absolute;left:878px;top:75px;width:1px;height:2px;background:#c586c0;opacity:0.4"></div><div style="position:absolute;left:879px;top:75px;width:1px;height:2px;background:#c586c0;opacity:0.4"></div><div style="position:absolute;left:880px;top:75px;width:1px;height:2px;background:#c586c0;opacity:0.4"></div><div style="position:absolute;left:881px;top:75px;width:1px;height:2px;background:#c586c0;opacity:0.4"></div><div style="position:absolute;left:882px;top:75px;width:1px;height:2px;background:#c586c0;opacity:0.4"></div><div style="position:absolute;left:883px;top:75px;width:1px;height:2px;background:#c586c0;opacity:0.4"></div><div style="position:absolute;left:885px;top:75px;width:1px;height:2px;background:#4ec9b0;opacity:0.28"></div><div style="position:absolute;left:886px;top:75px;width:1px;height:2px;background:#4ec9b0;opacity:0.28"></div><div style="position:absolute;left:887px;top:75px;width:1px;height:2px;background:#4ec9b0;opacity:0.28"></div><div style="position:absolute;left:888px;top:75px;width:1px;height:2px;background:#4ec9b0;opacity:0.28"></div><div style="position:absolute;left:889px;top:75px;width:1px;height:2px;background:#4ec9b0;opacity:0.28"></div><div style="position:absolute;left:890px;top:75px;width:1px;height:2px;background:#4ec9b0;opacity:0.28"></div><div style="position:absolute;left:891px;top:75px;width:1px;height:2px;background:#4ec9b0;opacity:0.28"></div><div style="position:absolute;left:878px;top:81px;width:1px;height:2px;background:#9cdcfe;opacity:0.4"></div><div style="position:absolute;left:879px;top:81px;width:1px;height:2px;background:#9cdcfe;opacity:0.4"></div><div style="position:absolute;left:880px;top:81px;width:1px;height:2px;background:#9cdcfe;opacity:0.4"></div><div style="position:absolute;left:881px;top:81px;width:1px;height:2px;background:#9cdcfe;opacity:0.4"></div><div style="position:absolute;left:882px;top:81px;width:1px;height:2px;background:#9cdcfe;opacity:0.4"></div><div style="position:absolute;left:883px;top:81px;width:1px;height:2px;background:#9cdcfe;opacity:0.4"></div><div style="position:absolute;left:884px;top:81px;width:1px;height:2px;background:#9cdcfe;opacity:0.4"></div><div style="position:absolute;left:885px;top:81px;width:1px;height:2px;background:#9cdcfe;opacity:0.4"></div><div style="position:absolute;left:886px;top:81px;width:1px;height:2px;background:#9cdcfe;opacity:0.4"></div><div style="position:absolute;left:887px;top:81px;width:1px;height:2px;background:#9cdcfe;opacity:0.4"></div><div style="position:absolute;left:888px;top:81px;width:1px;height:2px;background:#9cdcfe;opacity:0.4"></div><div style="position:absolute;left:890px;top:81px;width:1px;height:2px;background:#d4d4d4;opacity:0.4"></div><div style="position:absolute;left:892px;top:81px;width:1px;height:2px;background:#d4d4d4;opacity:0.4"></div><div style="position:absolute;left:882px;top:83px;width:1px;height:2px;background:#dcdcaa;opacity:0.4"></div><div style="position:absolute;left:883px;top:83px;width:1px;height:2px;background:#dcdcaa;opacity:0.4"></div><div style="position:absolute;left:884px;top:83px;width:1px;height:2px;background:#dcdcaa;opacity:0.4"></div><div style="position:absolute;left:885px;top:83px;width:1px;height:2px;background:#dcdcaa;opacity:0.4"></div><div style="position:absolute;left:886px;top:83px;width:1px;height:2px;background:#d4d4d4;opacity:0.4"></div><div style="position:absolute;left:887px;top:83px;width:1px;height:2px;background:#ce9178;opacity:0.4"></div><div style="position:absolute;left:888px;top:83px;width:1px;height:2px;background:#ce9178;opacity:0.4"></div><div style="position:absolute;left:889px;top:83px;width:1px;height:2px;background:#d4d4d4;opacity:0.4"></div><div style="position:absolute;left:890px;top:83px;width:1px;height:2px;background:#4ec9b0;opacity:0.4"></div><div style="position:absolute;left:891px;top:83px;width:1px;height:2px;background:#4ec9b0;opacity:0.4"></div><div style="position:absolute;left:892px;top:83px;width:1px;height:2px;background:#4ec9b0;opacity:0.4"></div><div style="position:absolute;left:893px;top:83px;width:1px;height:2px;background:#4ec9b0;opacity:0.4"></div><div style="position:absolute;left:894px;top:83px;width:1px;height:2px;background:#4ec9b0;opacity:0.4"></div><div style="position:absolute;left:895px;top:83px;width:1px;height:2px;background:#d4d4d4;opacity:0.4"></div><div style="position:absolute;left:896px;top:83px;width:1px;height:2px;background:#dcdcaa;opacity:0.4"></div><div style="position:absolute;left:897px;top:83px;width:1px;height:2px;background:#dcdcaa;opacity:0.4"></div><div style="position:absolute;left:898px;top:83px;width:1px;height:2px;background:#dcdcaa;opacity:0.4"></div><div style="position:absolute;left:899px;top:83px;width:1px;height:2px;background:#dcdcaa;opacity:0.4"></div><div style="position:absolute;left:900px;top:83px;width:1px;height:2px;background:#dcdcaa;opacity:0.4"></div><div style="position:absolute;left:901px;top:83px;width:1px;height:2px;background:#d4d4d4;opacity:0.4"></div><div style="position:absolute;left:902px;top:83px;width:1px;height:2px;background:#d4d4d4;opacity:0.4"></div><div style="position:absolute;left:878px;top:85px;width:1px;height:2px;background:#d4d4d4;opacity:0.4"></div>
<svg class="ic" style="left:0;top:0" width="951" height="766"><g fill="none" stroke="#d2ad00" stroke-width="1.4" stroke-linejoin="round"><polyline points="361.0,94.4 364.0,92.6 367.0,94.4 370.0,92.6 373.0,94.4 376.0,92.6 379.0,94.4 382.0,92.6 385.0,94.4 388.0,92.6 391.0,94.4 394.0,92.6 397.0,94.4 400.0,92.6 403.0,94.4 406.0,92.6 409.0,94.4 412.0,92.6 415.0,94.4 418.0,92.6 421.0,94.4 424.0,92.6 427.0,94.4 430.0,92.6 433.0,94.4 436.0,92.6 439.0,94.4 442.0,92.6 445.0,94.4 448.0,92.6 451.0,94.4 454.0,92.6 457.0,94.4 460.0,92.6 463.0,94.4 466.0,92.6 469.0,94.4 472.0,92.6 475.0,94.4 478.0,92.6 478.6,92.96"/><polyline points="361.0,113.4 364.0,111.6 367.0,113.4 370.0,111.6 373.0,113.4 376.0,111.6 379.0,113.4 382.0,111.6 385.0,113.4 388.0,111.6 391.0,113.4 394.0,111.6 397.0,113.4 400.0,111.6 403.0,113.4 406.0,111.6 409.0,113.4 412.0,111.6 415.0,113.4 418.0,111.6 421.0,113.4 424.0,111.6 427.0,113.4 430.0,111.6 433.0,113.4 436.0,111.6 439.0,113.4 442.0,111.6 445.0,113.4 448.0,111.6 451.0,113.4 453.4,111.96"/><polyline points="361.0,132.4 364.0,130.6 367.0,132.4 370.0,130.6 373.0,132.4 376.0,130.6 379.0,132.4 382.0,130.6 385.0,132.4 388.0,130.6 391.0,132.4 394.0,130.6 397.0,132.4 400.0,130.6 403.0,132.4 406.0,130.6 409.0,132.4 412.0,130.6 415.0,132.4 418.0,130.6 421.0,132.4 424.0,130.6 427.0,132.4 430.0,130.6 433.0,132.4 436.0,130.6 439.0,132.4 442.0,130.6 445.0,132.4 448.0,130.6 451.0,132.4 453.4,130.96"/><polyline points="361.0,151.4 364.0,149.6 367.0,151.4 370.0,149.6 373.0,151.4 376.0,149.6 379.0,151.4 382.0,149.6 385.0,151.4 388.0,149.6 391.0,151.4 394.0,149.6 397.0,151.4 400.0,149.6 403.0,151.4 406.0,149.6 409.0,151.4 412.0,149.6 415.0,151.4 418.0,149.6 421.0,151.4 424.0,149.6 427.0,151.4 430.0,149.6 433.0,151.4 436.0,149.6 439.0,151.4 442.0,149.6 445.0,151.4 448.0,149.6 451.0,151.4 454.0,149.6 457.0,151.4 460.0,149.6 463.0,151.4 466.0,149.6 469.0,151.4 472.0,149.6 475.0,151.4 478.0,149.6 481.0,151.4 484.0,149.6 487.0,151.4 490.0,149.6 493.0,151.4 496.0,149.6 499.0,151.4 502.0,149.6 505.0,151.4 508.0,149.6 511.0,151.4 514.0,149.6 517.0,151.4 520.0,149.6 523.0,151.4 526.0,149.6 529.0,151.4 532.0,149.6 535.0,151.4 538.0,149.6 541.0,151.4 544.0,149.6 547.0,151.4 550.0,149.6 553.0,151.4 554.2,150.68"/><polyline points="361.0,170.4 364.0,168.6 367.0,170.4 370.0,168.6 373.0,170.4 376.0,168.6 379.0,170.4 382.0,168.6 385.0,170.4 388.0,168.6 391.0,170.4 394.0,168.6 397.0,170.4 400.0,168.6 403.0,170.4 406.0,168.6 409.0,170.4 412.0,168.6 415.0,170.4 418.0,168.6 421.0,170.4 424.0,168.6 427.0,170.4 430.0,168.6 433.0,170.4 436.0,168.6 439.0,170.4 442.0,168.6 445.0,170.4 448.0,168.6 451.0,170.4 454.0,168.6 457.0,170.4 460.0,168.6 463.0,170.4 466.0,168.6 469.0,170.4 472.0,168.6 475.0,170.4 478.0,168.6 481.0,170.4 484.0,168.6 487.0,170.4 490.0,168.6 493.0,170.4 496.0,168.6 499.0,170.4 502.0,168.6 505.0,170.4 508.0,168.6 511.0,170.4 514.0,168.6 517.0,170.4 520.0,168.6 523.0,170.4 526.0,168.6 529.0,170.4"/><polyline points="361.0,189.4 364.0,187.6 367.0,189.4 370.0,187.6 373.0,189.4 376.0,187.6 379.0,189.4 382.0,187.6 385.0,189.4 388.0,187.6 391.0,189.4 394.0,187.6 397.0,189.4 400.0,187.6 403.0,189.4 406.0,187.6 409.0,189.4 412.0,187.6 415.0,189.4 418.0,187.6 421.0,189.4 424.0,187.6 427.0,189.4 430.0,187.6 433.0,189.4 436.0,187.6 439.0,189.4 442.0,187.6 445.0,189.4 448.0,187.6 451.0,189.4 453.4,187.96"/></g></svg>

<!-- minimap -->

<!-- scrollbar -->
<div style="position:absolute;left:944px;top:57px;width:1px;height:686px;background:#3c3c3c"></div>
<div style="position:absolute;left:945px;top:57px;width:6px;height:484px;background:#444444"></div>
<div style="position:absolute;left:944px;top:57px;width:1px;height:484px;background:#585858"></div>

<div id="status">
  <span class="a" style="left:-5px;top:0">n</span><span class="a" style="left:6px;top:0">3.9.5</span><span class="a" style="left:35px;top:0;letter-spacing:0.3px">64-bit</span>
  <svg class="ic" style="left:83px;top:747px;top:4px" width="14" height="14" viewBox="0 0 14 14"><circle cx="7" cy="7" r="5.8" fill="none" stroke="#fff" stroke-width="1"/><path d="M4.3 4.3l5.4 5.4M9.7 4.3l-5.4 5.4" stroke="#fff" stroke-width="1"/></svg>
  <span class="a" style="left:100px;top:0">0</span>
  <svg class="ic" style="left:109px;top:4px" width="14" height="13" viewBox="0 0 14 13"><path d="M7 1L1 12h12z" fill="none" stroke="#fff" stroke-width="1"/><path d="M7 5v4M7 10v1" stroke="#fff" stroke-width="1"/></svg>
  <span class="a" style="left:126px;top:0">11</span>
  <span class="a" style="left:555px;top:0;letter-spacing:-0.1px">Строка 1, столбец 1</span>
  <span class="a" style="left:682px;top:0">Пробелов: 4</span>
  <span class="a" style="left:767px;top:0;letter-spacing:-0.4px">UTF-8</span>
  <span class="a" style="left:815px;top:0;letter-spacing:-1.2px">LF</span>
  <span class="a" style="left:844px;top:0">Python</span>
  <svg class="ic" style="left:900px;top:4px" width="14" height="14" viewBox="0 0 14 14"><path d="M3.5 3.2V1.5h9v6h-3l-1.4 1.4" fill="none" stroke="#fff" stroke-width="1"/><circle cx="5.3" cy="6.8" r="2.3" fill="#007acc" stroke="#fff" stroke-width="1"/><path d="M0.8 13.2a4.3 4 0 0 1 8.6 0" fill="none" stroke="#fff" stroke-width="1"/></svg>
  <svg class="ic" style="left:930px;top:4px" width="13" height="14" viewBox="0 0 13 14"><path d="M2.5 10V6a4 4 0 0 1 8 0v4l1.5 1.5H1zM5 12.5a1.5 1.5 0 0 0 3 0" fill="none" stroke="#fff" stroke-width="1"/></svg>
</div>
<div id="bline"></div>
</body></html>
